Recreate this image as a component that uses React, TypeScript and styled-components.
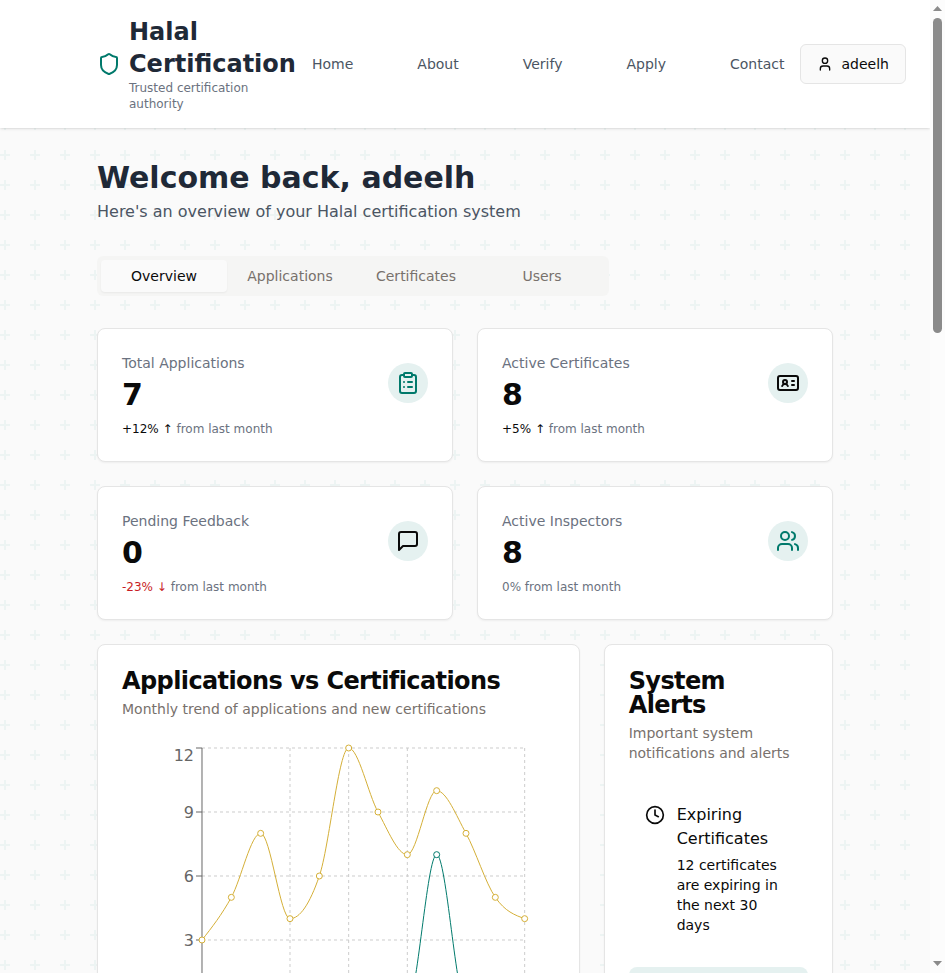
import React from 'react';
import styled, { createGlobalStyle, css } from 'styled-components';
import { Shield, User, ClipboardList, IdCard, Users, Clock } from 'lucide-react';

const GlobalStyle = createGlobalStyle`
  *, *::before, *::after { box-sizing: border-box; }
  html, body { margin: 0; height: 100%; overflow: hidden; }
  body {
    font-family: "DejaVu Sans", sans-serif;
    font-size: 16px;
    line-height: 24px;
    color: #0a0a0a;
    background: #fafafa;
  }
  h1, h2, h3, p { margin: 0; }
`;

const Window = styled.div`
  display: grid;
  grid-template-columns: minmax(0, 1fr) 15px;
  height: 973px;
  overflow: hidden;
`;

const Page = styled.div`
  height: 973px;
  overflow: hidden;
  background-color: #fafafa;
  background-image:
    conic-gradient(from 0deg at 10px 2px, transparent 270deg, #edf4f3 0),
    conic-gradient(from 0deg at 2px 10px, transparent 270deg, #edf4f3 0);
  background-size: 30px 30px;
  background-position: 0 4px, 4px 0;
`;

const ScrollTrack = styled.div`
  display: flex;
  flex-direction: column;
  align-items: center;
  justify-content: space-between;
  padding: 6px 0 7px;
  background: #fcfcfc;
`;

const ScrollTop = styled.div`
  display: flex;
  flex-direction: column;
  align-items: center;
  gap: 7px;
`;

const Arrow = styled.div<{ $down?: boolean }>`
  width: 9px;
  height: 5px;
  background: #8b8b8b;
  clip-path: ${p => (p.$down ? 'polygon(0 0, 100% 0, 50% 100%)' : 'polygon(50% 0, 100% 100%, 0 100%)')};
`;

const Thumb = styled.div`
  width: 9px;
  height: 315px;
  border-radius: 5px;
  background: #8b8b8b;
`;

const Header = styled.header`
  height: 128px;
  background: #fff;
  box-shadow: 0 1px 3px rgba(0, 0, 0, 0.1), 0 1px 2px -1px rgba(0, 0, 0, 0.1);
`;

const container = css`
  width: 768px;
  margin: 0 auto;
  padding: 0 16px;
`;

const HeaderInner = styled.div`
  ${container}
  display: flex;
  align-items: center;
  gap: 16px;
  height: 128px;
`;

const Brand = styled.div`
  display: flex;
  flex: none;
  align-items: center;
  gap: 8px;
  width: 199px;
  color: #00796b;

  svg {
    flex: none;
  }
`;

const BrandName = styled.h1`
  font-size: 24px;
  line-height: 32px;
  color: #1f2937;
`;

const BrandTag = styled.p`
  font-size: 12px;
  line-height: 16px;
  color: #6b7280;
`;

const Nav = styled.nav`
  display: flex;
  flex: none;
  gap: 64px;
`;

const NavLink = styled.a`
  font-size: 14px;
  line-height: 20px;
  color: #4b5563;
`;

const UserButton = styled.button`
  display: flex;
  flex: none;
  align-items: center;
  gap: 8px;
  height: 40px;
  padding: 0 16px;
  border: 1px solid #e5e5e5;
  border-radius: 6px;
  background: #fafafa;
  color: #0a0a0a;
  font: 14px/20px "DejaVu Sans", sans-serif;
`;

const Main = styled.main`
  ${container}
  padding-top: 32px;
`;

const Welcome = styled.h2`
  font-size: 30px;
  line-height: 36px;
  color: #1f2937;
`;

const Lead = styled.p`
  margin-top: 4px;
  color: #4b5563;
`;

const TabList = styled.div`
  display: grid;
  grid-template-columns: repeat(4, 1fr);
  width: 512px;
  height: 40px;
  margin: 32px 0;
  padding: 4px;
  border-radius: 6px;
  background: #f5f5f4;
`;

const Tab = styled.button<{ $active?: boolean }>`
  padding: 0;
  border: 0;
  border-radius: 4px;
  font: 14px/20px "DejaVu Sans", sans-serif;
  color: ${p => (p.$active ? '#0a0a0a' : '#78716c')};
  background: ${p => (p.$active ? '#fafafa' : 'transparent')};
  box-shadow: ${p => (p.$active ? '0 1px 2px rgba(0, 0, 0, 0.05)' : 'none')};
`;

const Card = styled.section`
  padding: 24px;
  border: 1px solid #e5e5e5;
  border-radius: 8px;
  background: #fff;
  box-shadow: 0 1px 2px rgba(0, 0, 0, 0.05);
`;

const StatGrid = styled.div`
  display: grid;
  grid-template-columns: repeat(2, 1fr);
  gap: 24px;
`;

const PanelGrid = styled.div`
  display: grid;
  grid-template-columns: 482.67px 229.33px;
  gap: 24px;
  margin-top: 24px;
`;

const StatRow = styled.div`
  display: flex;
  align-items: center;
  justify-content: space-between;
`;

const StatLabel = styled.p`
  font-size: 14px;
  line-height: 20px;
  color: #6b7280;
`;

const StatValue = styled.p`
  margin-top: 4px;
  font-size: 30px;
  line-height: 36px;
  font-weight: 700;
`;

const StatIcon = styled.div<{ $accent?: boolean }>`
  display: grid;
  place-items: center;
  width: 40px;
  height: 40px;
  border-radius: 50%;
  background: #e5f1f0;
  color: ${p => (p.$accent ? '#00796b' : '#0a0a0a')};
`;

const StatNote = styled.p`
  margin-top: 8px;
  font-size: 12px;
  line-height: 16px;
  color: #6b7280;
`;

const Delta = styled.span<{ $color: string }>`
  color: ${p => p.$color};
`;

const PanelTitle = styled.h3`
  font-size: 24px;
  line-height: 24px;
  letter-spacing: -0.6px;
`;

const PanelText = styled.p`
  margin: 6px 0 24px;
  font-size: 14px;
  line-height: 20px;
  color: #78716c;
`;

const ChartSvg = styled.svg`
  display: block;
  font-size: 16px;
`;

const AlertStack = styled.div`
  display: flex;
  flex-direction: column;
  gap: 16px;
`;

const Alert = styled.div<{ $tinted?: boolean }>`
  display: flex;
  gap: 12px;
  min-height: 100px;
  padding: 16px;
  border-radius: 8px;
  background: ${p => (p.$tinted ? '#e5f1f0' : 'transparent')};

  svg {
    flex: none;
    margin-top: 2px;
  }
`;

const AlertText = styled.p`
  margin-top: 4px;
  font-size: 14px;
  line-height: 20px;
`;

const MessageIcon = () => (
  <svg
    width="24"
    height="24"
    viewBox="0 0 24 24"
    fill="none"
    stroke="currentColor"
    strokeWidth="2"
    strokeLinecap="round"
    strokeLinejoin="round"
  >
    <path d="M21 15a2 2 0 0 1-2 2H7l-4 4V5a2 2 0 0 1 2-2h14a2 2 0 0 1 2 2z" />
  </svg>
);

type Point = [number, number];

/* Cubic path through the points that never overshoots between neighbours. */
function monotonePath(pts: Point[]): string {
  const n = pts.length;
  const slope = pts.slice(1).map((p, i) => (p[1] - pts[i][1]) / (p[0] - pts[i][0]));
  const tangent = new Array<number>(n).fill(0);
  for (let i = 1; i < n - 1; i++) {
    const a = slope[i - 1];
    const b = slope[i];
    tangent[i] =
      (Math.sign(a) + Math.sign(b)) * Math.min(Math.abs(a), Math.abs(b), 0.5 * Math.abs((a + b) / 2)) || 0;
  }
  tangent[0] = (3 * slope[0] - tangent[1]) / 2;
  tangent[n - 1] = (3 * slope[n - 2] - tangent[n - 2]) / 2;
  let d = `M${pts[0][0]},${pts[0][1]}`;
  for (let i = 0; i < n - 1; i++) {
    const [x0, y0] = pts[i];
    const [x1, y1] = pts[i + 1];
    const dx = (x1 - x0) / 3;
    d += `C${x0 + dx},${y0 + dx * tangent[i]},${x1 - dx},${y1 - dx * tangent[i + 1]},${x1},${y1}`;
  }
  return d;
}

const applications = [3, 5, 8, 4, 6, 12, 9, 7, 10, 8, 5, 4];
const certifications = [0, 0, 0, 0, 0, 0, 0, 0, 7, 0, 0, 0];
const LEFT = 80;
const TOP = 5;
const PLOT_W = 322.67;
const PLOT_H = 256;
const px = (i: number) => LEFT + (i * PLOT_W) / 11;
const py = (v: number) => TOP + ((12 - v) * PLOT_H) / 12;

const Series = ({ data, color }: { data: number[]; color: string }) => {
  const pts = data.map((v, i): Point => [px(i), py(v)]);
  return (
    <g stroke={color}>
      <path d={monotonePath(pts)} fill="none" />
      {pts.map(([x, y], i) => (
        <circle key={i} cx={x} cy={y} r={3} fill="#fff" />
      ))}
    </g>
  );
};

const TrendChart = () => (
  <ChartSvg width="432.67" height="300" viewBox="0 0 432.67 300">
    <g stroke="#ccc" strokeDasharray="3 3">
      {[0, 3, 6, 9, 12].map(v => (
        <line key={v} x1={LEFT} x2={LEFT + PLOT_W} y1={py(v)} y2={py(v)} />
      ))}
      {[3, 5, 7, 11].map(i => (
        <line key={i} x1={px(i)} x2={px(i)} y1={TOP} y2={TOP + PLOT_H} />
      ))}
    </g>
    <g stroke="#666">
      <line x1={LEFT} x2={LEFT} y1={TOP} y2={TOP + PLOT_H} />
      {[3, 6, 9, 12].map(v => (
        <line key={v} x1={LEFT - 6} x2={LEFT} y1={py(v)} y2={py(v)} />
      ))}
    </g>
    <g fill="#666" textAnchor="end">
      {[3, 6, 9, 12].map(v => (
        <text key={v} x={LEFT - 8} y={(v === 12 ? 12.5 : py(v)) + 5.68}>
          {v}
        </text>
      ))}
    </g>
    <Series data={applications} color="#d4af37" />
    <Series data={certifications} color="#00796b" />
  </ChartSvg>
);

const stats = [
  { label: 'Total Applications', value: 7, delta: '+12% ↑', color: '#0a0a0a', accent: true, icon: <ClipboardList /> },
  { label: 'Active Certificates', value: 8, delta: '+5% ↑', color: '#0a0a0a', icon: <IdCard /> },
  { label: 'Pending Feedback', value: 0, delta: '-23% ↓', color: '#c81d25', icon: <MessageIcon /> },
  { label: 'Active Inspectors', value: 8, delta: '0%', color: '#6b7280', accent: true, icon: <Users /> },
];

export default function App() {
  return (
    <>
      <GlobalStyle />
      <Window>
        <Page>
          <Header>
            <HeaderInner>
              <Brand>
                <Shield size={24} />
                <div>
                  <BrandName>Halal Certification</BrandName>
                  <BrandTag>Trusted certification authority</BrandTag>
                </div>
              </Brand>
              <Nav>
                {['Home', 'About', 'Verify', 'Apply', 'Contact'].map(item => (
                  <NavLink key={item}>{item}</NavLink>
                ))}
              </Nav>
              <UserButton>
                <User size={16} />
                adeelh
              </UserButton>
            </HeaderInner>
          </Header>
          <Main>
            <Welcome>Welcome back, adeelh</Welcome>
            <Lead>Here's an overview of your Halal certification system</Lead>
            <TabList>
              <Tab $active>Overview</Tab>
              <Tab>Applications</Tab>
              <Tab>Certificates</Tab>
              <Tab>Users</Tab>
            </TabList>
            <StatGrid>
              {stats.map(s => (
                <Card key={s.label}>
                  <StatRow>
                    <div>
                      <StatLabel>{s.label}</StatLabel>
                      <StatValue>{s.value}</StatValue>
                    </div>
                    <StatIcon $accent={s.accent}>{s.icon}</StatIcon>
                  </StatRow>
                  <StatNote>
                    <Delta $color={s.color}>{s.delta}</Delta> from last month
                  </StatNote>
                </Card>
              ))}
            </StatGrid>
            <PanelGrid>
              <Card>
                <PanelTitle>Applications vs Certifications</PanelTitle>
                <PanelText>Monthly trend of applications and new certifications</PanelText>
                <TrendChart />
              </Card>
              <Card>
                <PanelTitle>System Alerts</PanelTitle>
                <PanelText>Important system notifications and alerts</PanelText>
                <AlertStack>
                  <Alert>
                    <Clock size={20} />
                    <div>
                      <p>Expiring Certificates</p>
                      <AlertText>12 certificates are expiring in the next 30 days</AlertText>
                    </div>
                  </Alert>
                  <Alert $tinted />
                </AlertStack>
              </Card>
            </PanelGrid>
          </Main>
        </Page>
        <ScrollTrack>
          <ScrollTop>
            <Arrow />
            <Thumb />
          </ScrollTop>
          <Arrow $down />
        </ScrollTrack>
      </Window>
    </>
  );
}
